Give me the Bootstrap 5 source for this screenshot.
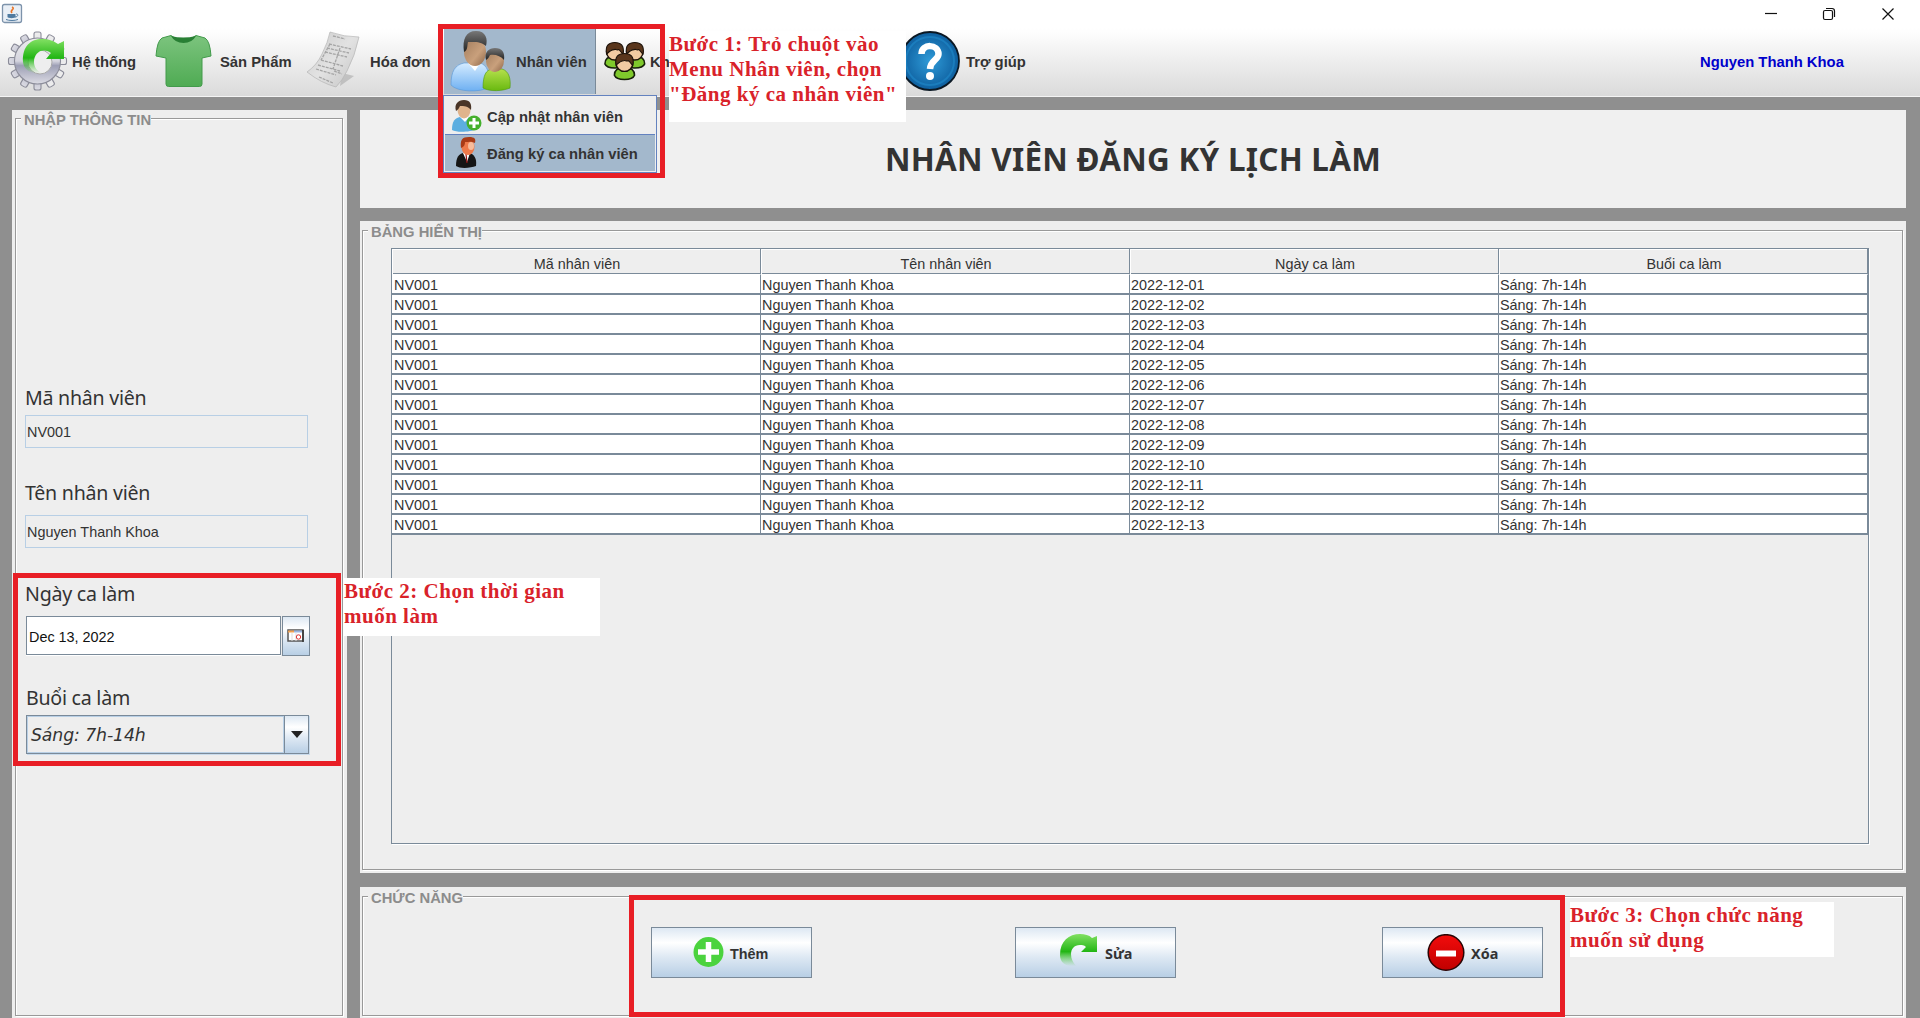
<!DOCTYPE html>
<html lang="vi">
<head>
<meta charset="utf-8">
<title>Nhân viên đăng ký lịch làm</title>
<link href="https://cdn.jsdelivr.net/npm/bootstrap@5.3.0/dist/css/bootstrap.min.css" rel="stylesheet">
<style>
body{width:1920px;height:1018px;overflow:hidden;background:#8f8f8f;color:#333;font-family:"Liberation Sans",Arial,sans-serif;font-size:14.4px;line-height:18px}
.app-window{width:1920px;height:1018px}
.title-strip{height:28px;background:#fff}
.menu-strip{height:69px;background:linear-gradient(#fff,#fdfdfd 8%,#dadada);border-bottom:1px solid #f4f4f4;font-weight:700;font-size:14.8px}
.menu-entry{height:66px;white-space:nowrap}
.menu-entry span{padding-top:2px}
.menu-entry svg{flex:none}
.menu-open{background:#a3b8cc;border-right:1px solid #7a8a99}
.user-name{color:#00c;width:220px}
.work-area{padding:13px 14px 0 12px;gap:13px}
.side-panel{width:335px;background:#eee;padding:8px 4px 2px 3px}
.main-col{width:1546px}
.title-panel{height:98px;background:#f0f0f0}
.page-title{font-family:"Noto Sans",sans-serif;font-weight:700;font-size:31.4px;line-height:40px;color:#333;white-space:nowrap;letter-spacing:.28px}
.grid-panel{height:652px;background:#eee;margin-top:13px;padding:9px 3px 3px 2px}
.action-panel{height:131px;background:#eee;margin-top:14px;padding:9px 3px 2px 2px}
.etched{border:1px solid #999;box-shadow:inset 1px 1px 0 #fff,1px 1px 0 #fff;position:relative}
.etched-title{position:absolute;top:-8px;left:5px;padding:0 0 0 3px;background:#eee;color:#8c8c8c;font-weight:700;font-size:14.8px;line-height:18px;white-space:nowrap}
.side-form{padding:267px 0 0 9px}
.form-caption{font-family:"Noto Sans",sans-serif;font-size:19.6px;line-height:24px;color:#333;white-space:nowrap;letter-spacing:-.25px}
.ro-field{width:283px;height:33px;border:1px solid #b8cfe5;padding-left:1px}
.date-field{width:255px;height:39px;border:1px solid #7a8a99;background:#fff;color:#111;padding:2px 0 0 2px;box-shadow:0 1px 0 #fff}
.metal{background:linear-gradient(#dde8f3,#fff 30%,#dde8f3 60%,#b8cfe5);border:1px solid #7a8a99}
.cal-btn{width:28px;height:40px}
.shift-combo{width:283px;height:39px;border:1px solid #7a8a99;box-shadow:1px 1px 0 #c9dbec}
.shift-value{font-family:"DejaVu Sans",sans-serif;font-style:italic;font-size:17.3px;letter-spacing:-.1px;border:1px solid #b8cfe5;padding-left:3px}
.arrow-btn{width:24px;border-width:0 0 0 1px}
.grid-scroll{margin:17px 33px 24px 28px;height:596px;border:1px solid #7a8a99;box-shadow:1px 1px 0 #fff}
.shift-grid{width:1476px;table-layout:fixed;border-collapse:separate;border-spacing:0}
.shift-grid th{height:26px;padding:4px 0 0 2px;line-height:20px;font-weight:400;text-align:center;border-right:1px solid #7a8a99;border-bottom:1px solid #fff;box-shadow:inset 1px 1px 0 #fff,inset 0 -1px 0 #7a8a99}
.shift-grid td{height:20px;padding:1px 0 0 1px;line-height:17px;background:#fff;border-right:1.6px solid #7a8a99;border-bottom:2px solid #7a8a99}
.shift-grid td{padding-top:2px;line-height:16px}
.shift-grid td:first-child{padding-left:2px}
.action-row{padding:30px 0 0 288px}
.cmd{width:161px;height:51px;font-weight:700;font-size:14.4px}
.cmd svg{flex:none}
.cmd span{padding-top:2px}
.cmd-alt{font-family:"Noto Sans",sans-serif}
.red-frame{position:absolute;border:5px solid #e81e25;z-index:5}
.step-note{position:absolute;z-index:6;padding-top:1px;background:#fff;color:#d9222a;font-family:"Liberation Serif","Times New Roman",serif;font-weight:700;font-size:21px;line-height:25.2px;white-space:nowrap;letter-spacing:.5px}
.drop-menu{position:absolute;left:443px;top:95px;width:214px;height:78px;background:#eee;border:1px solid #6382bf;z-index:4;padding:1px;font-weight:700;font-size:14.75px}
.drop-entry{height:37px;white-space:nowrap}
.drop-entry span{padding-top:2px}
.drop-active{background:#a3b8cc;border-top:1px solid #6382bf}
</style>
<script src="https://cdn.jsdelivr.net/npm/bootstrap@5.3.0/dist/js/bootstrap.bundle.min.js"></script>
</head>
<body>
<svg width="0" height="0" class="position-absolute">
<defs>
<linearGradient id="steel" x2="0" y2="1"><stop offset="0" stop-color="#eee"/><stop offset=".5" stop-color="#d5d5df"/><stop offset=".6" stop-color="#9d9fb5"/><stop offset="1" stop-color="#dcdce4"/></linearGradient>
<linearGradient id="leaf" x2="0" y2="1"><stop offset="0" stop-color="#82e063"/><stop offset=".55" stop-color="#22b614"/><stop offset="1" stop-color="#5fd04c" stop-opacity="0"/></linearGradient>
<linearGradient id="shirt" x2="0" y2="1"><stop offset="0" stop-color="#7cc47e"/><stop offset="1" stop-color="#4fab53"/></linearGradient>
<linearGradient id="skyb" x2="0" y2="1"><stop offset="0" stop-color="#d4ebff"/><stop offset="1" stop-color="#6eb0f2"/></linearGradient>
<linearGradient id="limeb" x2="0" y2="1"><stop offset="0" stop-color="#b5e04c"/><stop offset="1" stop-color="#69b910"/></linearGradient>
<linearGradient id="skin" x2="1" y2="1"><stop offset="0" stop-color="#a07b5c"/><stop offset=".6" stop-color="#c9a07c"/><stop offset="1" stop-color="#8b6447"/></linearGradient>
<linearGradient id="hair" x2="0" y2="1"><stop offset="0" stop-color="#777"/><stop offset="1" stop-color="#222"/></linearGradient>
<radialGradient id="ask"><stop offset="0" stop-color="#2f9bd8"/><stop offset="1" stop-color="#0e5f9f"/></radialGradient>
<linearGradient id="stop" x2="0" y2="1"><stop offset="0" stop-color="#f20c0c"/><stop offset="1" stop-color="#c00000"/></linearGradient>
<linearGradient id="paper" x2="1" y2="1"><stop offset="0" stop-color="#cacaca"/><stop offset=".5" stop-color="#e2e2e2"/><stop offset="1" stop-color="#c4c4c4"/></linearGradient>
<path id="bend" d="M0 21C0 7 9 0 20 0c5 0 9 1 12 4l5-2v16H21l5-5c-2-2-4-2-6-2-6 0-9 4-9 9 0 5 2 8 5 12C6 33 0 29 0 21Z"/>
<g id="member"><path d="M-1 19c0-5 3-7 9-7s9 2 9 7c-2 5-16 5-18 0Z" fill="#7fc92c" stroke="#17210a" stroke-width="1.400"/><circle cx="8" cy="8" r="7.500" fill="#f2cba2" stroke="#1c120a" stroke-width="1.300"/><path d="M.5 10C-1 2 3-.5 8-.5S17 2 15.500 10c-2-1-2-3-4-4-2 1-3-1-4 0-3 0-5 2-7 4Z" fill="#5a361c" stroke="#1c120a"/></g>
</defs>
</svg>
<div class="app-window position-relative d-flex flex-column">
  <div class="title-strip d-flex justify-content-between">
    <svg width="24" height="26" viewBox="0 0 24 26"><rect x="2.500" y="4.500" width="19" height="18" rx="2" fill="#e9eff6" stroke="#7d93ab" stroke-width="1.300"/><path d="M12 7c4 2-3 3 0 6" fill="none" stroke="#e8762b" stroke-width="1.600"/><path d="M7.500 14h8v3c0 1.500-8 1.500-8 0Z" fill="#4f7aa0"/><path d="M16 14c3 0 2 3-1 3M6 19.500c3 1.300 9 1.300 12 0" fill="none" stroke="#4f7aa0"/></svg>
    <svg width="170" height="28" viewBox="1750 0 170 28" fill="none" stroke="#111" stroke-width="1.200"><path d="M1765 13.500h12"/><rect x="1823.500" y="10.500" width="9" height="9" rx="1.500"/><path d="M1826 8.500h6a2.500 2.500 0 0 1 2.500 2.500v6"/><path d="M1882.500 8.500l11 11m0-11l-11 11"/></svg>
  </div>
  <nav class="menu-strip d-flex">
    <div class="menu-entry d-flex align-items-center" style="width:155px">
      <svg width="72" height="66" viewBox="0 28 72 66"><g fill="url(#steel)" stroke="#8b8c99" stroke-width="1.100"><rect x="34" y="32" width="7" height="58" rx="2"/><rect x="34" y="32" width="7" height="58" rx="2" transform="rotate(30 37.500 61)"/><rect x="34" y="32" width="7" height="58" rx="2" transform="rotate(60 37.500 61)"/><rect x="34" y="32" width="7" height="58" rx="2" transform="rotate(90 37.500 61)"/><rect x="34" y="32" width="7" height="58" rx="2" transform="rotate(120 37.500 61)"/><rect x="34" y="32" width="7" height="58" rx="2" transform="rotate(150 37.500 61)"/><circle cx="37.500" cy="61" r="23"/></g><circle cx="40" cy="62" r="12" fill="#eee" stroke="#aaa"/><path d="M23 62C22 46 31 39 42 39c7 0 12 2 16 5l6-3v18H46l5-6c-9-6-17 0-17 9 0 5 3 9 8 11-11 2-18-3-19-11Z" fill="url(#leaf)"/></svg><span>Hệ thống</span>
    </div>
    <div class="menu-entry d-flex align-items-center" style="width:150px">
      <svg width="65" height="66" viewBox="155 28 65 66"><path d="M171 35.500Q183 46 196 35.500L205 38q5 3 6 18l-9 2v26q0 2.500-2.500 2.500h-31q-2.500 0-2.500-2.500V58l-10-2q1-15 6-18Z" fill="url(#shirt)" stroke="#429a4b"/><path d="M171 36q12 3 25 0-4 7-12.500 7T171 36Z" fill="#287f34"/></svg><span>Sản Phẩm</span>
    </div>
    <div class="menu-entry d-flex align-items-center" style="width:139px">
      <svg width="65" height="66" viewBox="305 28 65 66"><path d="M340 86l14-10-12-3Z" fill="#aaa" opacity=".6"/><path d="M330 32q14 5 29 5-4 19-12 34-5 10-11 16-15-4-29-15 10-7 15-18 6-12 8-22Z" fill="url(#paper)" stroke="#b5b5b5" stroke-width=".7"/><path d="M333 36l12 3M329 44l22 5M327 48l22 5M325 52l22 5M321 60l22 6M318 65l22 6M316 69l20 6M330 44l-9 16M340 48l-7 21M319 77l14 6M334 71l8 3" fill="none" stroke="#a5a5a5" stroke-width="1.300" stroke-dasharray="3 1"/></svg><span>Hóa đơn</span>
    </div>
    <div class="menu-entry menu-open d-flex align-items-center" style="width:152px">
      <svg width="72" height="66" viewBox="444 28 72 66"><path d="M451 85c0-14 4-20 13-22h16c7 2 10 9 10 24-10 6-33 5-39-2Z" fill="url(#skyb)" stroke="#5797d8" stroke-width=".6"/><path d="M468 63l7 8 6-9Z" fill="#fff"/><ellipse cx="475" cy="52" rx="11" ry="14" fill="url(#skin)"/><path d="M464 52c-2-13 2-21 12-21s12 8 10 15c-5-5-13-4-18-4-1 4 0 8-4 10Z" fill="url(#hair)"/><path d="M483 88c0-13 3-18 9-19h10c7 2 9 10 8 19-7 3-20 4-27 0Z" fill="url(#limeb)" stroke="#4d990c" stroke-width=".6"/><ellipse cx="495" cy="61" rx="9" ry="11" fill="url(#skin)"/><path d="M486 60c-2-8 3-12 9-12 7 0 10 4 9 12-3-4-9-6-14-5-1 2-2 4-4 5Z" fill="url(#hair)"/></svg><span>Nhân viên</span>
    </div>
    <div class="menu-entry d-flex align-items-center" style="width:308px">
      <svg width="54" height="66" viewBox="596 28 54 66"><use href="#member" transform="translate(606 43) scale(1.100)"/><use href="#member" transform="translate(626 43) scale(1.100)"/><use href="#member" transform="translate(615.500 54) scale(1.120)"/></svg><span>Kh</span>
    </div>
    <div class="menu-entry d-flex align-items-center flex-grow-1">
      <svg width="62" height="66" viewBox="904 28 62 66"><circle cx="930" cy="61" r="29" fill="url(#ask)" stroke="#0b1824" stroke-width="1.800"/><circle cx="930" cy="61" r="24" fill="none" stroke="#1b7dbd" stroke-width="2"/><path d="M921.500 54c0-11 17-10 17 0 0 6-8 6-8.500 15" fill="none" stroke="#fff" stroke-width="6.500"/><circle cx="930" cy="76" r="4" fill="#fff"/></svg><span>Trợ giúp</span>
    </div>
    <div class="menu-entry user-name d-flex align-items-center"><span>Nguyen Thanh Khoa</span></div>
  </nav>

  <main class="work-area d-flex flex-grow-1">
    <aside class="side-panel">
      <div class="etched h-100">
        <div class="etched-title">NHẬP THÔNG TIN</div>
        <div class="side-form">
          <div class="form-caption">Mã nhân viên</div>
          <div class="ro-field d-flex align-items-center" style="margin-top:5px">NV001</div>
          <div class="form-caption" style="margin-top:33px">Tên nhân viên</div>
          <div class="ro-field d-flex align-items-center" style="margin-top:10px">Nguyen Thanh Khoa</div>
          <div class="form-caption" style="margin-top:34px">Ngày ca làm</div>
          <div class="d-flex" style="margin:10px 0 0 1px;gap:1px"><div class="date-field d-flex align-items-center">Dec 13, 2022</div><div class="metal cal-btn d-flex align-items-center justify-content-center"><svg width="18" height="14" viewBox="0 0 18 14"><path d="M1 1h15v11H1Z" fill="#fff" stroke="#555" stroke-width="1.500"/><path d="M1 2.500h6" stroke="#f0a050" stroke-width="2"/><path d="M7 2.500h8" stroke="#98b4e0" stroke-width="2"/><path d="M5 4v8M9 4v8" stroke="#ddd"/><path d="M16 1v12" stroke="#333" stroke-width="1.500"/><circle cx="11.500" cy="8" r="2.200" fill="none" stroke="#d33"/></svg></div></div>
          <div class="form-caption" style="margin:30px 0 0 1px">Buổi ca làm</div>
          <div class="shift-combo d-flex" style="margin:5px 0 0 1px"><div class="shift-value flex-grow-1 d-flex align-items-center">Sáng: 7h-14h</div><div class="metal arrow-btn d-flex align-items-center justify-content-center"><svg width="12" height="7" viewBox="0 0 12 7"><path d="M0 0h12L6 7Z" fill="#222"/></svg></div></div>
        </div>
      </div>
    </aside>
    <div class="main-col">
      <section class="title-panel d-flex align-items-center justify-content-center"><h1 class="page-title m-0">NHÂN VIÊN ĐĂNG KÝ LỊCH LÀM</h1></section>
      <section class="grid-panel">
        <div class="etched h-100">
          <div class="etched-title">BẢNG HIỂN THỊ</div>
          <div class="d-flex flex-column"><div class="grid-scroll">
            <table class="shift-grid"><thead><tr><th>Mã nhân viên</th><th>Tên nhân viên</th><th>Ngày ca làm</th><th>Buổi ca làm</th></tr></thead><tbody id="rows"></tbody></table>
          </div></div>
        </div>
      </section>
      <section class="action-panel">
        <div class="etched h-100">
          <div class="etched-title">CHỨC NĂNG</div>
          <div class="action-row d-flex">
            <div class="cmd metal d-flex align-items-center" style="padding-left:41px;gap:6px"><svg width="31" height="31" viewBox="0 0 31 31"><circle cx="15.500" cy="15" r="15" fill="#4bd33e"/><path d="M15.500 5v20M5 15h21" stroke="#fff" stroke-width="5.500"/></svg><span>Thêm</span></div>
            <div class="cmd cmd-alt metal d-flex align-items-center" style="margin-left:203px;padding-left:44px;gap:7px"><svg width="38" height="38" viewBox="0 0 38 38"><use href="#bend" fill="url(#leaf)"/></svg><span>Sửa</span></div>
            <div class="cmd cmd-alt metal d-flex align-items-center" style="margin-left:206px;padding-left:44px;gap:6px"><svg width="38" height="38" viewBox="0 0 38 38"><circle cx="19" cy="18.500" r="17.800" fill="url(#stop)" stroke="#2a0505" stroke-width="1.500"/><path d="M9 19.500h20" stroke="#fff" stroke-width="6"/></svg><span>Xóa</span></div>
          </div>
        </div>
      </section>
    </div>
  </main>

  <div class="drop-menu">
    <div class="drop-entry d-flex align-items-center"><svg width="42" height="37" viewBox="445 97 42 37"><path d="M452 130c0-9 3-12 8-13h8c5 1 8 5 8 12-5 3-19 4-24 1Z" fill="#5caee0"/><path d="M460 117l5 5 4-5Z" fill="#fff"/><ellipse cx="464" cy="110" rx="6.500" ry="8.500" fill="#e0b48c"/><path d="M456 111c-2-7 2-11 8-11s8 4 7 10c-3-4-7-4-11-4-1 2-2 4-4 5Z" fill="#4a3527"/><circle cx="474" cy="123" r="7.500" fill="#45b02c"/><path d="M474 118v10M469 123h10" stroke="#fff" stroke-width="3"/></svg><span>Cập nhật nhân viên</span></div>
    <div class="drop-entry drop-active d-flex align-items-center"><svg width="42" height="35" viewBox="445 135 42 35"><path d="M456 165c0-9 3-12 7-13h6c5 1 8 5 7 13-5 2-16 3-20 0Z" fill="#151515"/><path d="M463 152l4 9 3-9Z" fill="#fff"/><path d="M466 153l1 9" stroke="#911" stroke-width="1.200"/><ellipse cx="468" cy="146" rx="6.500" ry="8" fill="#ee7a4a"/><ellipse cx="471" cy="145" rx="3" ry="4" fill="#f8bc9b"/><path d="M461 147c-1-8 1-11 8-11 6 0 7 2 6 6-4-2-6-1-10-1 0 3-1 5-4 6Z" fill="#a93b16"/></svg><span>Đăng ký ca nhân viên</span></div>
  </div>
  <div class="red-frame" style="left:438px;top:24px;width:227px;height:154px"></div>
  <div class="red-frame" style="left:13px;top:573px;width:328px;height:193px"></div>
  <div class="red-frame" style="left:629px;top:895px;width:936px;height:122px"></div>
  <div class="step-note" style="left:669px;top:31px;width:237px;height:91px">Bước 1: Trỏ chuột vào<br>Menu Nhân viên, chọn<br>"Đăng ký ca nhân viên"</div>
  <div class="step-note" style="left:344px;top:578px;width:256px;height:58px">Bước 2: Chọn thời gian<br>muốn làm</div>
  <div class="step-note" style="left:1570px;top:902px;width:264px;height:55px">Bước 3: Chọn chức năng<br>muốn sử dụng</div>
</div>
<script>
const body = document.getElementById('rows');
for (let d = 1; d <= 13; d++) {
  const tr = body.insertRow();
  for (const v of ['NV001', 'Nguyen Thanh Khoa', '2022-12-' + String(d).padStart(2, '0'), 'Sáng: 7h-14h']) tr.insertCell().textContent = v;
}
</script>
</body>
</html>
